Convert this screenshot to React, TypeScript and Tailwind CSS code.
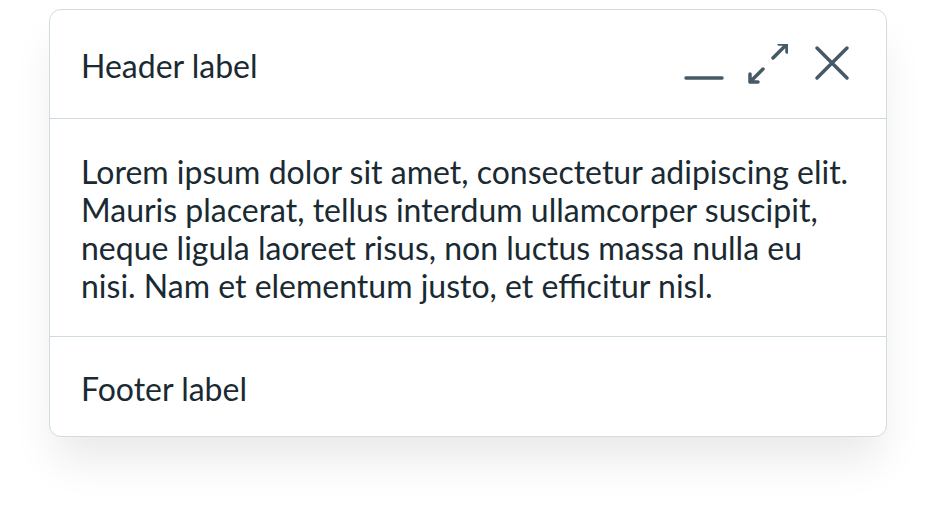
export default function App() {
  return (
    <div className="w-[936px] h-[526px] bg-white pt-[9px] font-['Lato','Noto_Sans',sans-serif] text-[#1a2a32]">
      <div className="mx-auto w-[838px] rounded-[12px] border border-[#d0dce1] bg-white shadow-[0_28px_44px_-6px_rgba(0,0,0,0.09)]">
        <div className="flex h-[109px] items-center justify-between border-b border-[#d0dce1] pl-[31px] pr-[34px]">
          <h2 className="mt-1 text-[32px] leading-none">Header label</h2>
          <div className="flex items-center gap-6 text-[#455a64]">
            <svg width="40" height="40" viewBox="0 0 40 40" fill="none" stroke="currentColor" strokeWidth="3.5" strokeLinecap="round">
              <path d="M2 34H38" />
            </svg>
            <svg width="40" height="40" viewBox="0 0 40 40" fill="none" stroke="currentColor" strokeWidth="3.5" strokeLinecap="round" strokeLinejoin="round">
              <path d="M15 25L2 38M2 30V38H10" />
              <path d="M25 14L39 0M31 0H39V8" />
            </svg>
            <svg width="40" height="40" viewBox="0 0 40 40" fill="none" stroke="currentColor" strokeWidth="3.5" strokeLinecap="round">
              <path d="M5 4L35 34M35 4L5 34" />
            </svg>
          </div>
        </div>
        <div className="border-b border-[#d0dce1] pl-[31px] pr-6 pt-[34px] pb-[31px]">
          <p className="text-[32px] leading-[38px]">
            Lorem ipsum dolor sit amet, consectetur adipiscing elit. Mauris placerat, tellus interdum ullamcorper suscipit, neque ligula laoreet risus, non luctus massa nulla eu nisi. Nam et elementum justo, et efficitur nisl.
          </p>
        </div>
        <div className="flex h-[99px] items-center pl-[31px]">
          <span className="mt-1 text-[32px] leading-none">Footer label</span>
        </div>
      </div>
    </div>
  );
}
